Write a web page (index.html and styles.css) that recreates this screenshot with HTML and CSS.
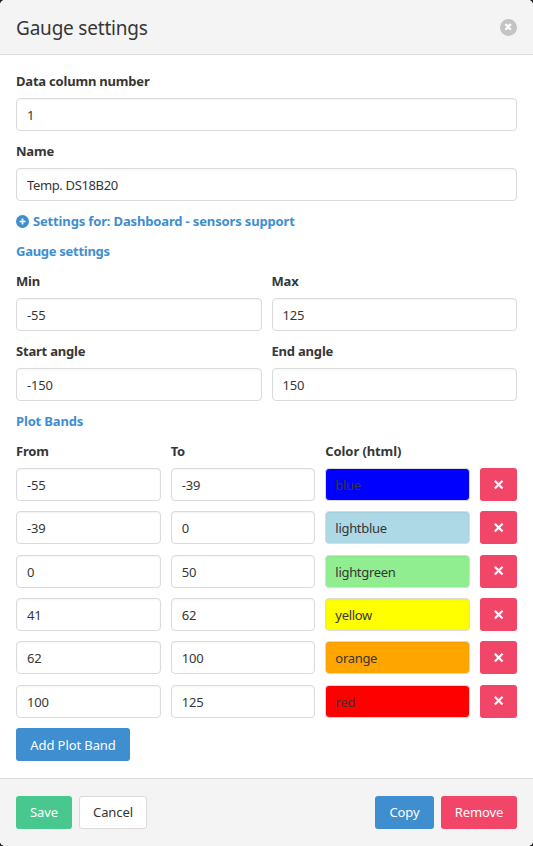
FILE: index.html
```html
<!DOCTYPE html>
<html lang="en">
<head>
<meta charset="utf-8">
<title>Gauge settings</title>
<link rel="stylesheet" href="styles.css">
</head>
<body>
<div class="modal">
<header class="head"><h1>Gauge settings</h1><button class="close" aria-label="close"><svg viewBox="0 0 17 17"><circle cx="8.5" cy="8.5" r="8.5" fill="#c4c4c4"/><path d="M5.4 5l5.4 5.8M10.8 5l-5.4 5.8" stroke="#fff" stroke-width="2.2"/></svg></button></header>
<main class="body">
<label class="label">Data column number</label>
<input class="input" value="1">
<label class="label">Name</label>
<input class="input" value="Temp. DS18B20">
<a class="link"><svg class="plus" viewBox="0 0 13 13"><circle cx="6.5" cy="6.5" r="6.5" fill="#3e8ed0"/><path d="M6.5 3.5v6M3.5 6.5h6" stroke="#fff" stroke-width="1.7"/></svg><span>Settings for: Dashboard - sensors support</span></a>
<a class="link tight">Gauge settings</a>
<div class="pair">
<div><label class="label">Min</label><input class="input" value="-55"></div>
<div><label class="label">Max</label><input class="input" value="125"></div>
<div><label class="label">Start angle</label><input class="input" value="-150"></div>
<div><label class="label">End angle</label><input class="input" value="150"></div>
</div>
<a class="link">Plot Bands</a>
<div class="bands" id="bands"><label class="label">From</label><label class="label">To</label><label class="label wide">Color (html)</label></div>
<button class="btn blue add"><span>Add Plot Band</span></button>
</main>
<footer class="foot"><button class="btn green save"><span>Save</span></button><button class="btn cancel"><span>Cancel</span></button><button class="btn blue copy"><span>Copy</span></button><button class="btn red remove"><span>Remove</span></button></footer>
</div>
<script src="script.js"></script>
</body>
</html>
```
FILE: styles.css
```css
*{box-sizing:border-box}
body{margin:0;background:#1f1f1f;font-family:"Noto Sans",sans-serif;font-size:13px;color:#363636}
.modal{height:846px;display:flex;flex-direction:column;background:#fff;border-radius:5px;overflow:hidden}
.head{height:55px;background:#f4f4f4;border-bottom:1px solid #dbdbdb;display:flex;align-items:center;justify-content:space-between;padding:0 16px}
h1{margin:0;padding-top:2px;font-size:19px;font-weight:400;letter-spacing:-.2px}
.close{width:17px;height:17px;padding:0;border:0;background:none}
.close svg{display:block}
.body{flex:1;padding:16px 16px 0}
.label{display:block;height:20px;line-height:20px;margin-bottom:7px;font-weight:700;letter-spacing:-.2px}
.input{display:block;width:100%;height:33px;margin:0 0 10px;padding:1px 10px 0;border:1px solid #dbdbdb;border-radius:4px;background:#fff;box-shadow:inset 0 1px 2px rgba(10,10,10,.05);color:#363636;font:inherit;letter-spacing:-.36px;outline:0}
.pair .input,.bands .input{letter-spacing:-.2px}
.bands .color{padding-left:9px;letter-spacing:-.3px}
.link{display:flex;align-items:center;height:20px;margin-bottom:10px;color:#3e8ed0;font-weight:700;letter-spacing:-.15px}
.tight{letter-spacing:-.28px}
.plus{width:13px;height:13px;margin-right:4px}
.pair{display:grid;grid-template-columns:1fr 1fr;column-gap:10px}
.bands{display:grid;grid-template-columns:1fr 1fr 1fr 37px;column-gap:10px}
.bands .input{margin-bottom:10.35px}
.wide{grid-column:span 2;letter-spacing:-.1px}
.btn{height:33px;padding:0;border:1px solid transparent;border-radius:3px;color:#fff;font:inherit;letter-spacing:-.1px}
.blue{background:#3e8ed0}
.green{background:#48c78e}
.red{background:#f14668}
.del{width:37px;display:flex;align-items:center;justify-content:center}
.del svg{width:10px;height:10px}
.add{width:114px;display:block}
.foot{height:68px;display:flex;align-items:center;padding:0 16px;background:#f4f4f4;border-top:1px solid #dbdbdb}
.foot .btn{padding-bottom:2px}
.save{width:56px}
.cancel{width:68px;margin-left:7px;background:#fff;border-color:#dbdbdb;color:#363636}
.copy{width:59px;margin-left:auto}
.remove{width:76px;margin-left:7px}
```
FILE: script.js
```js
const rows = [
  ['-55', '-39', 'blue'],
  ['-39', '0', 'lightblue'],
  ['0', '50', 'lightgreen'],
  ['41', '62', 'yellow'],
  ['62', '100', 'orange'],
  ['100', '125', 'red']
];
document.getElementById('bands').insertAdjacentHTML('beforeend', rows.map(([from, to, color]) =>
  `<input class="input" value="${from}"><input class="input" value="${to}"><input class="input color" value="${color}" style="background:${color}"><button class="btn red del" aria-label="delete"><svg viewBox="0 0 9 9"><path d="M.7 .7l7 7M7.7 .7l-7 7" stroke="#fff" stroke-width="2"/></svg></button>`
).join(''));
```
